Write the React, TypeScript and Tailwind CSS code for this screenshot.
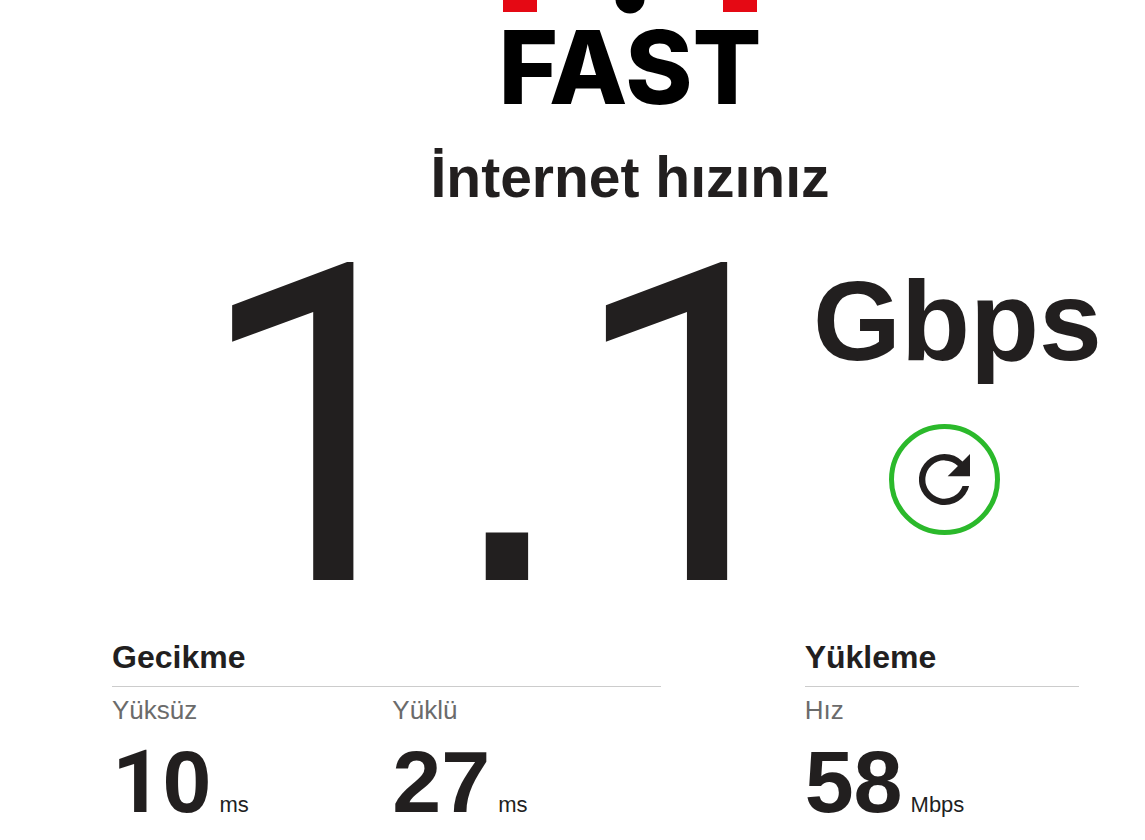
import { useState } from "react";

interface Metric {
  label: string;
  value: string;
  unit: string;
}

const latency: Metric[] = [
  { label: "Yüksüz", value: "10", unit: "ms" },
  { label: "Yüklü", value: "27", unit: "ms" },
];

const upload: Metric[] = [{ label: "Hız", value: "58", unit: "Mbps" }];

const Logo: React.FC = () => (
  <a href="#" aria-label="FAST" className="flex flex-col items-center text-black">
    <svg className="block h-6 w-[254px]" viewBox="0 0 254 24" aria-hidden="true">
      <path d="M0 0h34v12H0zM220 0h34v12h-34z" fill="#e50914" />
      <circle cx="127" cy="-1" r="14.5" />
    </svg>
    <span className="font-['Inter',sans-serif] text-[102px] leading-[86px] font-extrabold">FAST</span>
  </a>
);

// Roboto draws its "1" without a foot, so that digit is set apart from the rest
const Digits: React.FC<{ value: string }> = ({ value }) => (
  <>
    {value.split("").map((char, i) => (
      <span key={i} className={char === "1" ? "font-['Roboto',sans-serif]" : undefined}>
        {char}
      </span>
    ))}
  </>
);

const MetricItem: React.FC<{ metric: Metric }> = ({ metric }) => (
  <div>
    <dt className="text-[26px] leading-8 text-[#6b6b6b]">{metric.label}</dt>
    <dd className="mt-4 flex items-baseline gap-2">
      <span className="text-[88px] leading-20 font-bold">
        <Digits value={metric.value} />
      </span>
      <span className="text-[22px]">{metric.unit}</span>
    </dd>
  </div>
);

const MetricGroup: React.FC<{ title: string; metrics: Metric[] }> = ({ title, metrics }) => (
  <section>
    <h2 className="border-b border-[#cccccc] pb-[9px] text-[32px] leading-10 font-bold">{title}</h2>
    <dl className={metrics.length > 1 ? "mt-[7px] grid grid-cols-2 gap-3" : "mt-[7px]"}>
      {metrics.map((metric) => (
        <MetricItem key={metric.label} metric={metric} />
      ))}
    </dl>
  </section>
);

const App: React.FC = () => {
  const [speed, setSpeed] = useState("1.1");

  return (
    <main className="overflow-hidden bg-white pb-4 font-['Liberation_Sans',Arial,sans-serif] text-[#221f1f]">
      <header className="flex flex-col items-center pl-[115px]">
        <Logo />
        <h1 className="mt-[35px] text-[57px] leading-16 font-bold whitespace-nowrap">
          İnternet hızınız
        </h1>
      </header>

      <div className="mt-[17px] flex items-start pl-[195px]">
        <div className="w-[618px] shrink-0 text-[445px] leading-[400px] whitespace-nowrap">
          <Digits value={speed} />
        </div>
        <div className="mt-[39px]">
          <div className="text-[113px] leading-28 font-bold">Gbps</div>
          <button
            type="button"
            aria-label="Testi yeniden başlat"
            onClick={() => setSpeed("1.1")}
            className="mt-[47px] ml-[76px] flex size-[111px] items-center justify-center rounded-full border-5 border-[#2bb92b]"
          >
            <svg className="size-[51px]" viewBox="4 4 16 16" fill="currentColor" aria-hidden="true">
              <path d="M17.65 6.35A7.96 7.96 0 0 0 12 4a8 8 0 1 0 7.73 10h-2.08A6 6 0 1 1 12 6c1.66 0 3.14.69 4.22 1.78L13 11h7V4z" />
            </svg>
          </button>
        </div>
      </div>

      <div className="mt-[9px] grid grid-cols-[2fr_1fr] gap-36 pr-[66px] pl-28">
        <MetricGroup title="Gecikme" metrics={latency} />
        <MetricGroup title="Yükleme" metrics={upload} />
      </div>
    </main>
  );
};

export default App;
